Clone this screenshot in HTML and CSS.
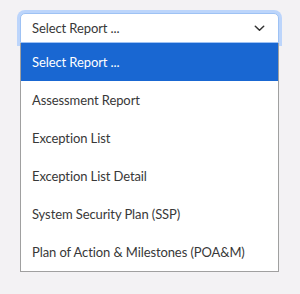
FILE: index.html
```html
<!DOCTYPE html>
<html>
<head>
<meta charset="utf-8">
<link rel="stylesheet" href="styles.css">
</head>
<body>
<div class="wrap">
  <div class="select">
    <span class="value">Select Report ...</span>
    <svg class="chev" width="11" height="7" viewBox="0 0 11 7"><path d="M1.3 1.3 L5.5 5.3 L9.7 1.3" fill="none" stroke="#333" stroke-width="1.5" stroke-linecap="round" stroke-linejoin="round"/></svg>
  </div>
  <ul class="list">
    <li class="opt active">Select Report ...</li>
    <li class="opt">Assessment Report</li>
    <li class="opt">Exception List</li>
    <li class="opt">Exception List Detail</li>
    <li class="opt">System Security Plan (SSP)</li>
    <li class="opt">Plan of Action &amp; Milestones (POA&amp;M)</li>
  </ul>
</div>
</body>
</html>
```
FILE: styles.css
```css
html, body {
  margin: 0;
  padding: 0;
  background: #f3f2f4;
  font-family: Lato, "Noto Sans", sans-serif;
  color: #383838;
}
.wrap {
  padding: 13px 21px 0 20px;
  width: 259px;
}
.select {
  height: 30px;
  box-sizing: border-box;
  background: #fff;
  border: 1px solid #9ec2f4;
  border-radius: 5px 5px 0 0;
  box-shadow: 0 0 0 3px #bcd5fb;
  display: flex;
  align-items: center;
  justify-content: space-between;
  padding: 0 13px 0 11px;
  font-size: 13px;
  letter-spacing: -0.1px;
}
.chev {
  display: block;
}
.list {
  list-style: none;
  margin: 0;
  padding: 0;
  background: #fff;
  border: 1px solid #a0a0a0;
  border-top: none;
}
.opt {
  height: 38px;
  display: flex;
  align-items: center;
  padding-left: 11px;
  font-size: 13px;
  letter-spacing: -0.1px;
  color: #383838;
}
.opt.active {
  background: #1967d2;
  color: #fff;
}
```
